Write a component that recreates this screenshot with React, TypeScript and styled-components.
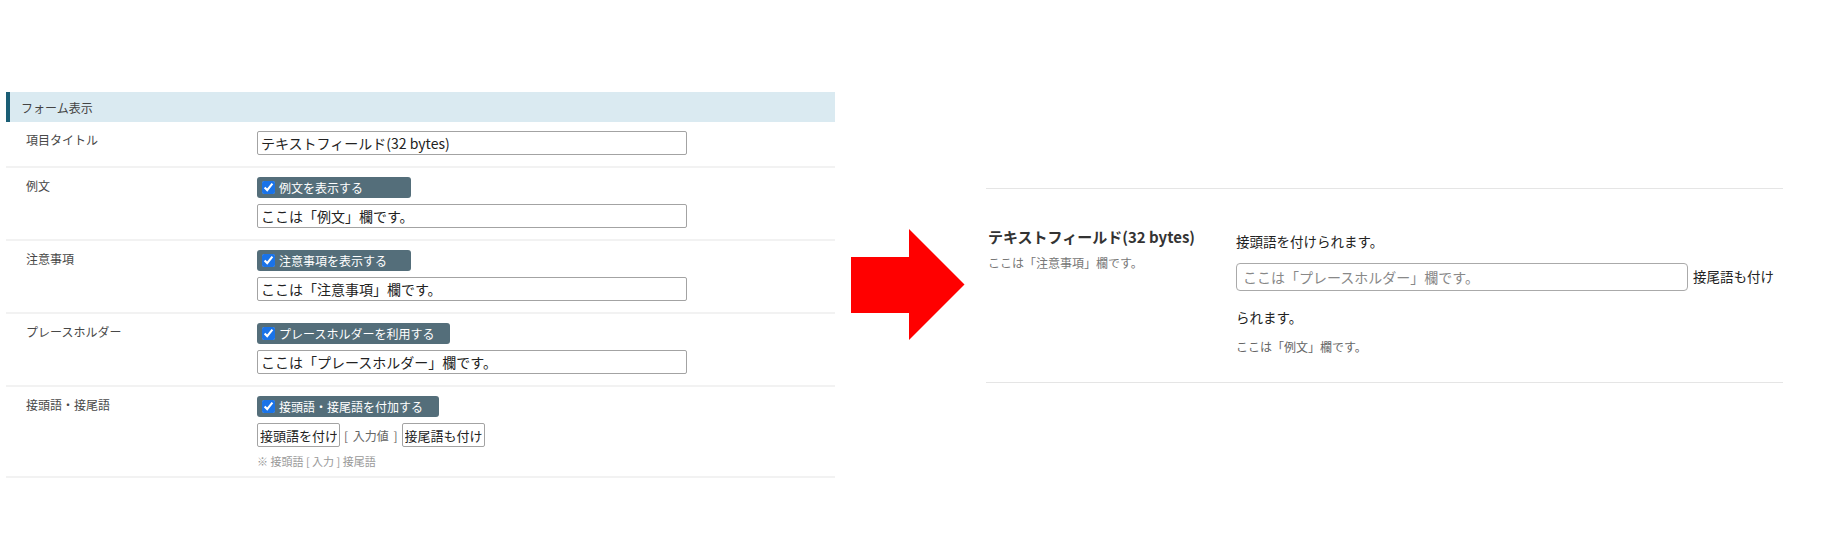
import React from "react";
import styled, { createGlobalStyle } from "styled-components";

const GlobalStyle = createGlobalStyle`
  html, body {
    margin: 0;
    padding: 0;
    background: #ffffff;
  }
  body {
    font-family: "Noto Sans CJK JP", "Noto Sans", sans-serif;
    color: #333;
  }
`;

const FONT = `"Noto Sans CJK JP", "Noto Sans", sans-serif`;

const Page = styled.div`
  display: flex;
  align-items: flex-start;
  width: 1825px;
`;

const FormPanel = styled.section`
  margin: 92px 0 0 6px;
  width: 829px;
  flex: none;
`;

const SectionHeader = styled.div`
  display: flex;
  align-items: center;
  height: 30px;
  box-sizing: border-box;
  padding-left: 11px;
  background: #daeaf1;
  border-left: 4px solid #1b5e75;
  font-size: 12px;
  color: #444;
`;

const Row = styled.div`
  display: grid;
  grid-template-columns: 231px 1fr;
  padding: 9px 0 11px 20px;
  border-bottom: 2px solid #f2f2f2;
`;

const RowLabel = styled.div`
  font-size: 12px;
  line-height: 18px;
  color: #484848;
`;

const Controls = styled.div`
  display: flex;
  flex-direction: column;
  align-items: flex-start;
  gap: 6px;
`;

const ToggleChip = styled.label`
  display: inline-flex;
  align-items: center;
  gap: 4px;
  height: 21px;
  min-width: 154px;
  box-sizing: border-box;
  padding: 0 16px 0 5px;
  background: #546e7a;
  color: #ffffff;
  border-radius: 3px;
  font-size: 12px;
  white-space: nowrap;
`;

const ChipCheck = styled.input`
  margin: 0;
  width: 13px;
  height: 13px;
  accent-color: #1a73e8;
`;

const TextInput = styled.input`
  width: 430px;
  height: 24px;
  box-sizing: border-box;
  border: 1px solid #a3a3a3;
  border-radius: 2px;
  padding: 0 3px;
  font-family: ${FONT};
  font-size: 14px;
  color: #222;
  background: #fff;
  outline: none;
`;

const AffixLine = styled.div`
  display: flex;
  align-items: center;
  gap: 4px;
`;

const AffixInput = styled.input`
  width: 83px;
  height: 24px;
  box-sizing: border-box;
  border: 1px solid #a3a3a3;
  border-radius: 2px;
  padding: 0 2px;
  font-family: ${FONT};
  font-size: 13px;
  color: #222;
  background: #fff;
  outline: none;
`;

const Bracket = styled.span`
  font-size: 12px;
  color: #666;
  white-space: pre;
  word-spacing: 2px;
`;

const Hint = styled.div`
  font-size: 11px;
  line-height: 16px;
  color: #999;
  margin-bottom: -4px;
  white-space: pre;
`;

const Arrow = styled.svg`
  flex: none;
  margin: 229px 0 0 16px;
  display: block;
`;

const Preview = styled.section`
  flex: none;
  margin: 188px 0 0 21px;
  width: 797px;
  box-sizing: border-box;
  border-top: 1px solid #e5e5e5;
  border-bottom: 1px solid #e5e5e5;
  display: grid;
  grid-template-columns: 250px 1fr;
  padding: 37px 0 26px 0;
`;

const TitleCol = styled.div`
  padding-left: 2px;
`;

const PreviewTitle = styled.div`
  font-size: 15px;
  font-weight: 700;
  line-height: 22px;
  color: #333;
`;

const PreviewNote = styled.div`
  margin-top: 6px;
  font-size: 12px;
  line-height: 18px;
  color: #777;
`;

const FieldCol = styled.div`
  padding-top: 2px;
  font-size: 13.5px;
  line-height: 27px;
  color: #222;
`;

const InputFlow = styled.div`
  margin-top: 8px;
`;

const PreviewInput = styled.input`
  vertical-align: top;
  width: 452px;
  height: 28px;
  box-sizing: border-box;
  margin: 0 5px 13px 0;
  border: 1px solid #aaaaaa;
  border-radius: 4px;
  padding: 0 6px;
  font-family: ${FONT};
  font-size: 14px;
  color: #333;
  background: #fff;
  outline: none;
  &::placeholder {
    color: #888;
  }
`;

const Example = styled.div`
  margin-top: 7px;
  font-size: 12px;
  line-height: 18px;
  color: #666;
`;

type ToggleRowProps = { label: string; chip: string; value: string };

const ToggleRow = ({ label, chip, value }: ToggleRowProps) => (
  <Row>
    <RowLabel>{label}</RowLabel>
    <Controls>
      <ToggleChip>
        <ChipCheck type="checkbox" defaultChecked />
        {chip}
      </ToggleChip>
      <TextInput defaultValue={value} />
    </Controls>
  </Row>
);

export default function App() {
  return (
    <>
      <GlobalStyle />
      <Page>
        <FormPanel>
          <SectionHeader>フォーム表示</SectionHeader>
          <Row>
            <RowLabel>項目タイトル</RowLabel>
            <Controls>
              <TextInput defaultValue="テキストフィールド(32 bytes)" />
            </Controls>
          </Row>
          <ToggleRow label="例文" chip="例文を表示する" value="ここは「例文」欄です。" />
          <ToggleRow
            label="注意事項"
            chip="注意事項を表示する"
            value="ここは「注意事項」欄です。"
          />
          <ToggleRow
            label="プレースホルダー"
            chip="プレースホルダーを利用する"
            value="ここは「プレースホルダー」欄です。"
          />
          <Row>
            <RowLabel>接頭語・接尾語</RowLabel>
            <Controls>
              <ToggleChip>
                <ChipCheck type="checkbox" defaultChecked />
                接頭語・接尾語を付加する
              </ToggleChip>
              <AffixLine>
                <AffixInput defaultValue="接頭語を付け" />
                <Bracket>[ 入力値 ]</Bracket>
                <AffixInput defaultValue="接尾語も付け" />
              </AffixLine>
              <Hint>※ 接頭語 [ 入力 ] 接尾語</Hint>
            </Controls>
          </Row>
        </FormPanel>

        <Arrow width="114" height="112" viewBox="0 0 114 112" aria-hidden="true">
          <polygon points="0,28 58,28 58,0 113.5,55.5 58,111 58,84 0,84" fill="#ff0000" />
        </Arrow>

        <Preview>
          <TitleCol>
            <PreviewTitle>テキストフィールド(32 bytes)</PreviewTitle>
            <PreviewNote>ここは「注意事項」欄です。</PreviewNote>
          </TitleCol>
          <FieldCol>
            <div>接頭語を付けられます。</div>
            <InputFlow>
              <PreviewInput placeholder="ここは「プレースホルダー」欄です。" />
              接尾語も付けられます。
            </InputFlow>
            <Example>ここは「例文」欄です。</Example>
          </FieldCol>
        </Preview>
      </Page>
    </>
  );
}
